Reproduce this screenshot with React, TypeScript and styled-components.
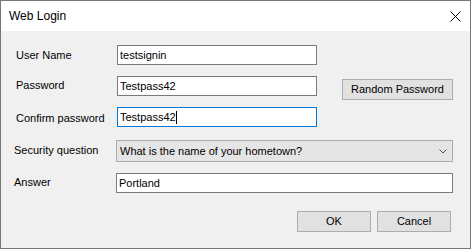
import React from "react";
import styled, { createGlobalStyle } from "styled-components";

const Global = createGlobalStyle`
  html, body { margin: 0; padding: 0; background: #ffffff; overflow: hidden; }
  * { box-sizing: border-box; }
`;

const Window = styled.div`
  width: 471px;
  height: 249px;
  border: 1px solid #777777;
  display: flex;
  flex-direction: column;
  font-family: "Liberation Sans", Arial, sans-serif;
  color: #000;
`;

const TitleBar = styled.div`
  height: 30px;
  background: #ffffff;
  display: flex;
  align-items: center;
  justify-content: space-between;
  padding: 0 9px 0 8px;
`;

const Title = styled.span`
  font-size: 12px;
`;

const CloseIcon = styled.svg`
  display: block;
  width: 11px;
  height: 11px;
`;

const Client = styled.div`
  flex: 1;
  background: #f0f0f0;
  padding-top: 14px;
  display: flex;
  flex-direction: column;
`;

const Row = styled.div<{ $h: number; $indent: number }>`
  display: flex;
  align-items: flex-start;
  height: ${(p) => p.$h}px;
  padding-left: ${(p) => p.$indent}px;
`;

const Label = styled.div<{ $w: number; $dy: number }>`
  width: ${(p) => p.$w}px;
  font-size: 11px;
  line-height: 20px;
  margin-top: ${(p) => p.$dy}px;
  white-space: nowrap;
`;

const TextBox = styled.div<{ $w: number; $focused?: boolean }>`
  width: ${(p) => p.$w}px;
  height: 20px;
  background: #ffffff;
  border: 1px solid ${(p) => (p.$focused ? "#0078d7" : "#7a7a7a")};
  padding-left: 2px;
  font-size: 11px;
  line-height: 18px;
  white-space: nowrap;
  overflow: hidden;
`;

const Caret = styled.span`
  display: inline-block;
  width: 1px;
  height: 13px;
  background: #000;
  vertical-align: -3px;
`;

const Combo = styled.div`
  width: 337px;
  height: 22px;
  background: #e5e5e5;
  border: 1px solid #acacac;
  padding: 0 5px 0 3px;
  display: flex;
  align-items: center;
  justify-content: space-between;
  font-size: 11px;
  line-height: 20px;
`;

const Chevron = styled.svg`
  display: block;
  width: 8px;
  height: 5px;
`;

const Button = styled.div<{ $w: number; $dy?: number; $ml?: number }>`
  width: ${(p) => p.$w}px;
  height: 21px;
  margin-top: ${(p) => p.$dy ?? 0}px;
  margin-left: ${(p) => p.$ml ?? 0}px;
  background: #e1e1e1;
  border: 1px solid #adadad;
  font-size: 11px;
  line-height: 19px;
  text-align: center;
  white-space: nowrap;
`;

const ButtonRow = styled.div`
  display: flex;
  justify-content: flex-end;
  gap: 6px;
  padding-right: 19px;
`;

export default function App() {
  return (
    <>
      <Global />
      <Window>
        <TitleBar>
          <Title>Web Login</Title>
          <CloseIcon viewBox="0 0 11 11">
            <path d="M0.5 0.5 L10.5 10.5 M10.5 0.5 L0.5 10.5" stroke="#000" strokeWidth="1" />
          </CloseIcon>
        </TitleBar>
        <Client>
          <Row $h={31} $indent={15}>
            <Label $w={101} $dy={0}>User Name</Label>
            <TextBox $w={200}>testsignin</TextBox>
          </Row>
          <Row $h={31} $indent={15}>
            <Label $w={101} $dy={-1}>Password</Label>
            <TextBox $w={200}>Testpass42</TextBox>
            <Button $w={111} $dy={3} $ml={25}>Random Password</Button>
          </Row>
          <Row $h={33} $indent={15}>
            <Label $w={101} $dy={1}>Confirm password</Label>
            <TextBox $w={200} $focused>
              Testpass42
              <Caret />
            </TextBox>
          </Row>
          <Row $h={33} $indent={13}>
            <Label $w={102} $dy={0}>Security question</Label>
            <Combo>
              <span>What is the name of your hometown?</span>
              <Chevron viewBox="0 0 8 5">
                <polyline points="0.5,0.5 4,4 7.5,0.5" fill="none" stroke="#555" strokeWidth="1" />
              </Chevron>
            </Combo>
          </Row>
          <Row $h={38} $indent={13}>
            <Label $w={102} $dy={-1}>Answer</Label>
            <TextBox $w={337}>Portland</TextBox>
          </Row>
          <ButtonRow>
            <Button $w={74}>OK</Button>
            <Button $w={74}>Cancel</Button>
          </ButtonRow>
        </Client>
      </Window>
    </>
  );
}
